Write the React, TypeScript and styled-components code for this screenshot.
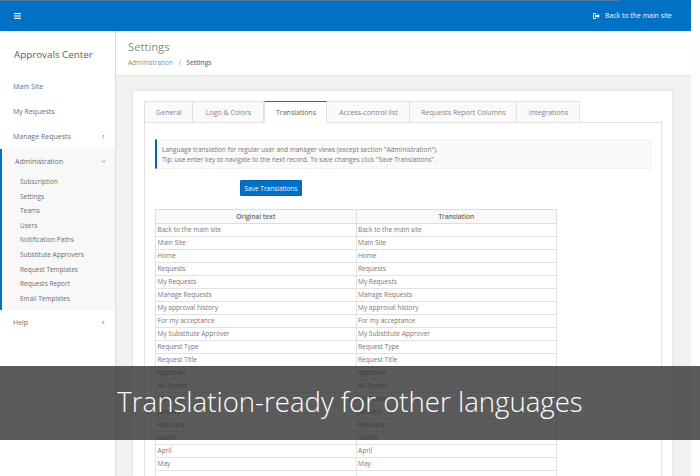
import { createGlobalStyle, styled } from "styled-components";

const GlobalStyle = createGlobalStyle`
  html, body {
    margin: 0;
    padding: 0;
    height: 100%;
    background: #fdfdfd;
  }
  body {
    font-family: "Open Sans", "Noto Sans", sans-serif;
    overflow: hidden;
  }
`;

const Screen = styled.div`
  position: relative;
  width: 700px;
  height: 476px;
  overflow: hidden;
`;

const Page = styled.div`
  width: 691px;
  height: 476px;
  display: flex;
  flex-direction: column;
  background: #fff;
`;

const TopBar = styled.header`
  height: 31px;
  flex: none;
  position: relative;
  display: flex;
  align-items: center;
  justify-content: space-between;
  padding: 0 19px 0 14px;
  background: #0071c5;
  color: #fff;
  box-shadow: 0 1px 2px rgba(0, 0, 0, 0.15);
  z-index: 1;
  &::before {
    content: "";
    position: absolute;
    left: 0;
    top: 0;
    width: 620px;
    height: 1px;
    background: #50789c;
  }
`;

const BackLink = styled.a`
  display: flex;
  align-items: center;
  gap: 5px;
  font-size: 6.9px;
  font-weight: 400;
  color: #f2f7fb;
`;

const Body = styled.div`
  flex: 1;
  display: flex;
  min-height: 0;
`;

const Sidebar = styled.nav`
  width: 116px;
  flex: none;
  box-sizing: border-box;
  border-right: 1px solid #ddd;
  background: #fff;
  color: #666;
`;

const Brand = styled.div`
  height: 43px;
  padding: 16px 0 0 14px;
  box-sizing: border-box;
  font-size: 9.8px;
  line-height: 16px;
  color: #5d5d5d;
`;

const NavItem = styled.div`
  height: 25px;
  display: flex;
  align-items: center;
  justify-content: space-between;
  padding: 0 9px 0 13px;
  font-size: 7px;
  color: #6d6d6d;
`;

const Section = styled.div`
  background: #f8f8f8;
  border-left: 2px solid #0071c5;
  height: 161px;
  box-sizing: border-box;
`;

const SubList = styled.div`
  display: flex;
  flex-direction: column;
  padding: 1px 0 0 18px;
`;

const SubItem = styled.div`
  height: 14.6px;
  line-height: 14.6px;
  font-size: 6.5px;
  color: #6d6d6d;
  white-space: nowrap;
`;

const Main = styled.main`
  flex: 1;
  min-width: 0;
  display: flex;
  flex-direction: column;
  background: #f1f1f1;
`;

const PageHeader = styled.div`
  height: 45px;
  flex: none;
  box-sizing: border-box;
  padding: 8px 0 0 12px;
  background: #fff;
  border-bottom: 1px solid #e6e6e6;
`;

const PageTitle = styled.div`
  font-size: 11.2px;
  line-height: 16px;
  color: #8a8a8a;
`;

const Crumbs = styled.div`
  margin-top: 3px;
  display: flex;
  gap: 5.5px;
  font-size: 6.5px;
  line-height: 10px;
  color: #8a8a8a;
`;

const CrumbCurrent = styled.span`
  font-weight: 600;
  color: #777;
`;

const Card = styled.section`
  margin: 15px 19px 0 17px;
  flex: 1;
  min-height: 0;
  box-sizing: border-box;
  padding: 10px 10px 0 11px;
  background: #fff;
  box-shadow: 0 0 2px rgba(0, 0, 0, 0.12);
`;

const Tabs = styled.div`
  display: flex;
  height: 22px;
  position: relative;
  z-index: 1;
`;

const Tab = styled.div<{ $active?: boolean; $width: number }>`
  width: ${({ $width }) => $width}px;
  box-sizing: border-box;
  display: flex;
  align-items: center;
  justify-content: center;
  padding-left: 1px;
  font-size: 7px;
  white-space: nowrap;
  color: ${({ $active }) => ($active ? "#5f5f5f" : "#838383")};
  font-weight: ${({ $active }) => ($active ? 500 : 400)};
  background: ${({ $active }) => ($active ? "#fff" : "#fafafa")};
  border: 1px solid #e2e2e2;
  border-left-width: ${({ $active }) => ($active ? "1px" : "0")};
  border-top: ${({ $active }) => ($active ? "1px solid #0071c5" : "1px solid #e2e2e2")};
  border-bottom: ${({ $active }) => ($active ? "1px solid #fff" : "1px solid #e2e2e2")};
  &:first-child {
    border-left-width: 1px;
  }
`;

const TabPanel = styled.div`
  margin-top: -1px;
  height: 400px;
  box-sizing: border-box;
  border: 1px solid #e2e2e2;
  padding: 16px 10px 0;
`;

const Notice = styled.div`
  height: 30px;
  box-sizing: border-box;
  padding: 5px 0 0 5px;
  background: #fafafa;
  border: 1px solid #f0f0f0;
  border-left: 2px solid #0a62ac;
  font-size: 6.5px;
  line-height: 9.6px;
  color: #777;
`;

const SaveButton = styled.button`
  display: block;
  margin: 11px 0 0 85px;
  width: 62px;
  height: 16px;
  padding: 0;
  border: 1px solid #0a62ac;
  border-radius: 1px;
  background: #0071c5;
  color: #f2f7fb;
  font-family: inherit;
  font-size: 6.5px;
  font-weight: 500;
`;

const Table = styled.table`
  margin-top: 13px;
  width: 402px;
  table-layout: fixed;
  border-collapse: collapse;
  font-size: 6.55px;
  color: #777;
`;

const Th = styled.th`
  height: 13px;
  padding: 0;
  background: #f9f9f9;
  border: 1px solid #ddd;
  font-weight: 600;
  font-size: 6.5px;
  color: #666;
  text-align: center;
`;

const Td = styled.td`
  height: 12px;
  padding: 0 0 0 1.500px;
  border: 1px solid #e2e2e2;
  line-height: 12px;
  white-space: nowrap;
  overflow: hidden;
`;

const Banner = styled.div`
  position: absolute;
  left: 0;
  right: 0;
  top: 366px;
  height: 74px;
  box-sizing: border-box;
  padding-bottom: 5px;
  display: flex;
  align-items: center;
  justify-content: center;
  background: rgba(45, 45, 45, 0.78);
  color: #fff;
  font-size: 27.6px;
  font-weight: 300;
  z-index: 2;
`;

const topNav = ["Main Site", "My Requests"];

const adminLinks = [
  "Subscription",
  "Settings",
  "Teams",
  "Users",
  "Notification Paths",
  "Substitute Approvers",
  "Request Templates",
  "Requests Report",
  "Email Templates",
];

const tabs = [
  { label: "General", width: 49 },
  { label: "Logo & Colors", width: 71 },
  { label: "Translations", width: 63, active: true },
  { label: "Access-control list", width: 83 },
  { label: "Requests Report Columns", width: 107 },
  { label: "Integrations", width: 63 },
];

const rows = [
  "Back to the main site",
  "Main Site",
  "Home",
  "Requests",
  "My Requests",
  "Manage Requests",
  "My approval history",
  "For my acceptance",
  "My Substitute Approver",
  "Request Type",
  "Request Title",
  "Approver",
  "All Teams",
  "My Team",
  "January",
  "February",
  "March",
  "April",
  "May",
  "",
];

function MenuIcon() {
  return (
    <svg width="7" height="6" viewBox="0 0 7 6" fill="#fff">
      <rect y="0" width="7" height="1.1" />
      <rect y="2.4" width="7" height="1.1" />
      <rect y="4.8" width="7" height="1.1" />
    </svg>
  );
}

function ExitIcon() {
  return (
    <svg width="7" height="6" viewBox="0 0 7 6" fill="#e8f2fa">
      <path d="M3 0H1a1 1 0 0 0-1 1v4a1 1 0 0 0 1 1h2V5H1V1h2z" />
      <path d="M2 2h2.4V.6L7 3 4.400 5.400V4H2z" />
    </svg>
  );
}

function Chevron({ down }: { down?: boolean }) {
  return (
    <svg width="5" height="5" viewBox="0 0 5 5" fill="none" stroke="#777" strokeWidth="0.8">
      <path d={down ? "M.8 1.600 2.500 3.300 4.200 1.600" : "M3.300.8 1.600 2.500 3.300 4.200"} />
    </svg>
  );
}

export default function App() {
  return (
    <Screen>
      <GlobalStyle />
      <Page>
        <TopBar>
          <MenuIcon />
          <BackLink>
            <ExitIcon />
            Back to the main site
          </BackLink>
        </TopBar>
        <Body>
          <Sidebar>
            <Brand>Approvals Center</Brand>
            {topNav.map((item) => (
              <NavItem key={item}>{item}</NavItem>
            ))}
            <NavItem>
              Manage Requests
              <Chevron />
            </NavItem>
            <Section>
              <NavItem>
                Administration
                <Chevron down />
              </NavItem>
              <SubList>
                {adminLinks.map((item) => (
                  <SubItem key={item}>{item}</SubItem>
                ))}
              </SubList>
            </Section>
            <NavItem>
              Help
              <Chevron />
            </NavItem>
          </Sidebar>
          <Main>
            <PageHeader>
              <PageTitle>Settings</PageTitle>
              <Crumbs>
                <span>Administration</span>
                <span>/</span>
                <CrumbCurrent>Settings</CrumbCurrent>
              </Crumbs>
            </PageHeader>
            <Card>
              <Tabs>
                {tabs.map((tab) => (
                  <Tab key={tab.label} $width={tab.width} $active={tab.active}>
                    {tab.label}
                  </Tab>
                ))}
              </Tabs>
              <TabPanel>
                <Notice>
                  Language translation for regular user and manager views (except section "Administration").
                  <br />
                  Tip: use enter key to navigate to the next record. To save changes click "Save Translations".
                </Notice>
                <SaveButton>Save Translations</SaveButton>
                <Table>
                  <thead>
                    <tr>
                      <Th>Original text</Th>
                      <Th>Translation</Th>
                    </tr>
                  </thead>
                  <tbody>
                    {rows.map((row, i) => (
                      <tr key={i}>
                        <Td>{row}</Td>
                        <Td>{row}</Td>
                      </tr>
                    ))}
                  </tbody>
                </Table>
              </TabPanel>
            </Card>
          </Main>
        </Body>
      </Page>
      <Banner>Translation-ready for other languages</Banner>
    </Screen>
  );
}
